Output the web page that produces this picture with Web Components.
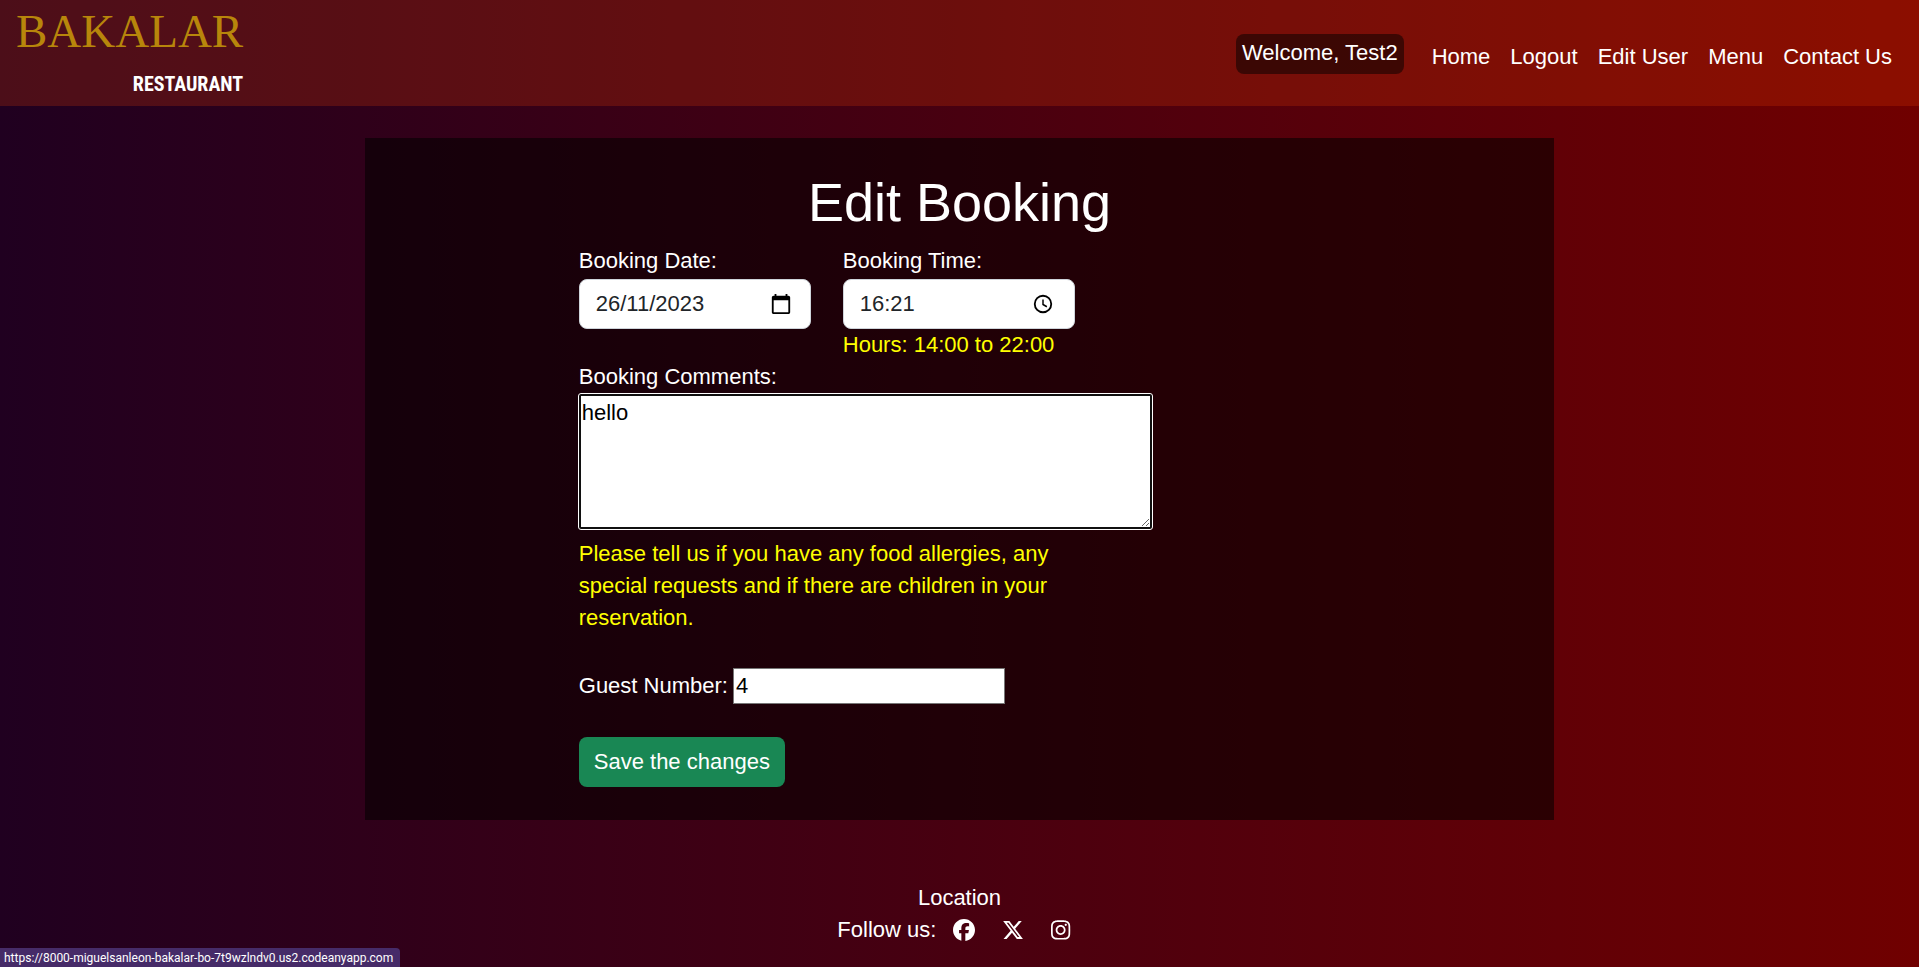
<!DOCTYPE html>
<html lang="en">
<head>
<meta charset="utf-8">
<title>Bakalar Restaurant - Edit Booking</title>
<style>
html { min-height: 100%; background: linear-gradient(to right, #200020, #700000); }
body { margin: 0; min-height: 100vh; display: flex; flex-direction: column; color: #fff;
  font: 22px/32px "Liberation Sans", Arial, sans-serif; }
</style>
</head>
<body>
<site-header user="Test2">
  <nav-link href="#home">Home</nav-link>
  <nav-link href="#logout">Logout</nav-link>
  <nav-link href="#user">Edit User</nav-link>
  <nav-link href="#menu">Menu</nav-link>
  <nav-link href="#contact">Contact Us</nav-link>
</site-header>
<booking-card>
  <span slot="title">Edit Booking</span>
  <booking-form></booking-form>
</booking-card>
<site-footer></site-footer>
<status-bar>https://8000-miguelsanleon-bakalar-bo-7t9wzlndv0.us2.codeanyapp.com</status-bar>

<script>
const define = (name, html, setup) => {
  const template = document.createElement('template');
  template.innerHTML = html;
  customElements.define(name, class extends HTMLElement {
    constructor() {
      super();
      this.attachShadow({ mode: 'open' }).append(template.content.cloneNode(true));
    }
    connectedCallback() { if (setup) setup(this, this.shadowRoot); }
  });
};

define('nav-link', `
<style>
:host { display: block; }
a { color: #fff; text-decoration: none; }
</style>
<a><slot></slot></a>`, (el, root) => { root.querySelector('a').href = el.getAttribute('href'); });

define('site-header', `
<style>
:host { display: flex; justify-content: space-between; align-items: center; box-sizing: border-box;
  height: 106px; padding: 0 27px 0 16px; background: rgba(255, 69, 0, .2); }
.brand { display: flex; flex-direction: column; align-items: flex-end; color: #fff; text-decoration: none; }
.name { font: 47px/62px "Liberation Serif", serif; color: #b8860b; }
.kind { font: bold 20px/44px "Liberation Sans Narrow", "Roboto Condensed", "Liberation Sans", sans-serif; }
.menu { display: flex; align-items: center; gap: 28px; padding-top: 2px; }
.user { padding: 3px 6px 5px; border-radius: 8px; background: rgba(0, 0, 0, .5); }
nav { display: flex; gap: 20px; padding-top: 6px; }
</style>
<a class="brand" href="#home"><span class="name">BAKALAR</span><span class="kind">RESTAURANT</span></a>
<div class="menu"><span class="user"></span><nav><slot></slot></nav></div>`,
(el, root) => { root.querySelector('.user').textContent = 'Welcome, ' + el.getAttribute('user'); });

define('booking-card', `
<style>
:host { display: block; box-sizing: border-box; width: 62%; min-width: 620px; margin: 32px auto 0; padding: 32px 0 33px;
  background: rgba(0, 0, 0, .55); }
h1 { margin: 0 0 11px; font-size: 54px; line-height: 64px; font-weight: 400; text-align: center; }
.body { width: 64%; min-width: 573px; margin: 0 auto; }
</style>
<h1><slot name="title"></slot></h1>
<div class="body"><slot></slot></div>`);

define('picker-field', `
<style>
:host { display: block; width: 232px; }
:host([kind="time"]) button { margin-right: 2px; }
label { display: block; margin-bottom: 2px; }
.box { display: flex; align-items: center; box-sizing: border-box; height: 50px; padding: 0 18px 0 16px;
  background: #fff; border: 1px solid #ced4da; border-radius: 8px; }
input { flex: 1; min-width: 0; padding: 0; border: 0; background: none; color: #212529; font: inherit; outline: 0; }
button { display: flex; padding: 0; border: 0; background: none; color: #000; }
</style>
<label for="value"></label>
<div class="box"><input id="value" type="text"><button type="button"></button></div>
<slot></slot>`, (el, root) => {
  const icons = {
    date: '<path fill="currentColor" d="M20 3h-1V1h-2v2H7V1H5v2H4c-1.100 0-2 .9-2 2v16c0 1.100.9 2 2 2h16c1.100 0 2-.9 2-2V5c0-1.100-.9-2-2-2zm0 18H4V8h16z"/>',
    time: '<circle cx="12" cy="12" r="9" fill="none" stroke="currentColor" stroke-width="2"/><path d="M12 7v5.500l4.200 2.500" fill="none" stroke="currentColor" stroke-width="1.600"/>'
  };
  root.querySelector('label').textContent = el.getAttribute('label');
  root.querySelector('input').value = el.getAttribute('value');
  const button = root.querySelector('button');
  button.setAttribute('aria-label', 'Choose ' + el.getAttribute('kind'));
  button.innerHTML = '<svg width="22" height="22" viewBox="0 0 24 24">' + icons[el.getAttribute('kind')] + '</svg>';
});

define('booking-form', `
<style>
:host { display: block; }
.row { display: flex; gap: 32px; }
.hint { display: block; color: #ff0; }
.comments { display: block; }
textarea { display: block; box-sizing: border-box; width: 573px; height: 135px; margin: 1px 0 9px; padding: 1px;
  font: inherit; color: #000; background: #fff; border: 2px solid #101010; border-radius: 2px; outline: 1px solid #fff; }
.help { margin: 0; width: 496px; color: #ff0; }
.guests { display: flex; align-items: center; gap: 5px; margin: 34px 0 33px; }
.guests input { box-sizing: border-box; width: 272px; height: 36px; padding: 1px 2px; border: 1px solid #767676;
  font: inherit; color: #000; background: #fff; appearance: textfield; }
button { display: block; height: 50px; padding: 0 15px; border: 0; border-radius: 8px; background: #198754; color: #fff; font: inherit; }
</style>
<form>
  <div class="row">
    <picker-field kind="date" label="Booking Date:" value="26/11/2023"></picker-field>
    <picker-field kind="time" label="Booking Time:" value="16:21"><span class="hint">Hours: 14:00 to 22:00</span></picker-field>
  </div>
  <label class="comments" for="comments">Booking Comments:</label>
  <textarea id="comments">hello</textarea>
  <p class="help">Please tell us if you have any food allergies, any special requests and if there are children in your reservation.</p>
  <div class="guests"><label for="guests">Guest Number:</label><input id="guests" type="number" value="4"></div>
  <button type="submit">Save the changes</button>
</form>`);

define('site-footer', `
<style>
:host { display: flex; flex-direction: column; align-items: center; margin-top: 62px; padding-bottom: 20px; }
a { color: #fff; text-decoration: none; }
.social { display: flex; align-items: center; gap: 27px; padding-right: 11px; }
.social span { margin-right: -10px; }
.social a { display: flex; }
svg { display: block; height: 22px; fill: currentColor; }
</style>
<a href="#location">Location</a>
<div class="social">
  <span>Follow us:</span>
  <a href="#facebook" aria-label="Facebook"><svg viewBox="0 0 512 512"><path d="M512 256C512 114.600 397.400 0 256 0S0 114.600 0 256C0 376 82.700 476.800 194.200 504.500V334.200H141.400V256h52.800V222.300c0-87.100 39.400-127.500 125-127.500c16.200 0 44.200 3.200 55.700 6.400V172c-6-.6-16.500-1-29.600-1c-42 0-58.200 15.900-58.200 57.200V256h83.600l-14.400 78.200H287V510.100C413.800 494.800 512 386.900 512 256z"/></svg></a>
  <a href="#x" aria-label="X"><svg viewBox="0 0 512 512"><path d="M389.200 48h70.600L305.600 224.200 487 464H345L233.700 318.600 106.500 464H35.800L200.700 275.500 26.800 48H172.400L272.900 180.900 389.200 48zM364.400 421.800h39.100L151.100 88h-42L364.400 421.800z"/></svg></a>
  <a href="#instagram" aria-label="Instagram"><svg viewBox="0 0 448 512"><path d="M224.100 141c-63.600 0-114.900 51.300-114.900 114.900s51.300 114.900 114.900 114.900S339 319.500 339 255.900 287.700 141 224.100 141zm0 189.600c-41.100 0-74.700-33.500-74.700-74.700s33.500-74.700 74.700-74.700 74.700 33.500 74.700 74.700-33.600 74.700-74.700 74.700zm146.400-194.300c0 14.900-12 26.800-26.800 26.800-14.900 0-26.800-12-26.800-26.800s12-26.800 26.800-26.800 26.800 12 26.800 26.800zm76.100 27.200c-1.700-35.900-9.900-67.700-36.200-93.900-26.200-26.200-58-34.400-93.900-36.200-37-2.100-147.900-2.100-184.900 0-35.800 1.700-67.600 9.900-93.900 36.100s-34.400 58-36.200 93.900c-2.100 37-2.100 147.900 0 184.900 1.700 35.900 9.900 67.700 36.200 93.900s58 34.400 93.900 36.200c37 2.100 147.900 2.100 184.900 0 35.900-1.700 67.700-9.900 93.900-36.200 26.200-26.200 34.400-58 36.200-93.900 2.100-37 2.100-147.800 0-184.800zM398.800 388c-7.800 19.600-22.900 34.700-42.600 42.600-29.500 11.700-99.500 9-132.100 9s-102.700 2.600-132.100-9c-19.600-7.800-34.700-22.900-42.600-42.600-11.700-29.500-9-99.500-9-132.100s-2.600-102.700 9-132.100c7.800-19.600 22.900-34.700 42.600-42.600 29.500-11.700 99.500-9 132.100-9s102.700-2.600 132.100 9c19.600 7.800 34.700 22.900 42.600 42.600 11.700 29.500 9 99.500 9 132.100s2.700 102.700-9 132.100z"/></svg></a>
</div>`);

define('status-bar', `
<style>
:host { position: fixed; left: 0; bottom: 0; padding: 0 7px 0 4px; height: 19px; border-radius: 0 4px 0 0;
  background: #462b68; color: #fff; font: 12px/20px Roboto, "Noto Sans", sans-serif; }
</style>
<slot></slot>`);
</script>
</body>
</html>
